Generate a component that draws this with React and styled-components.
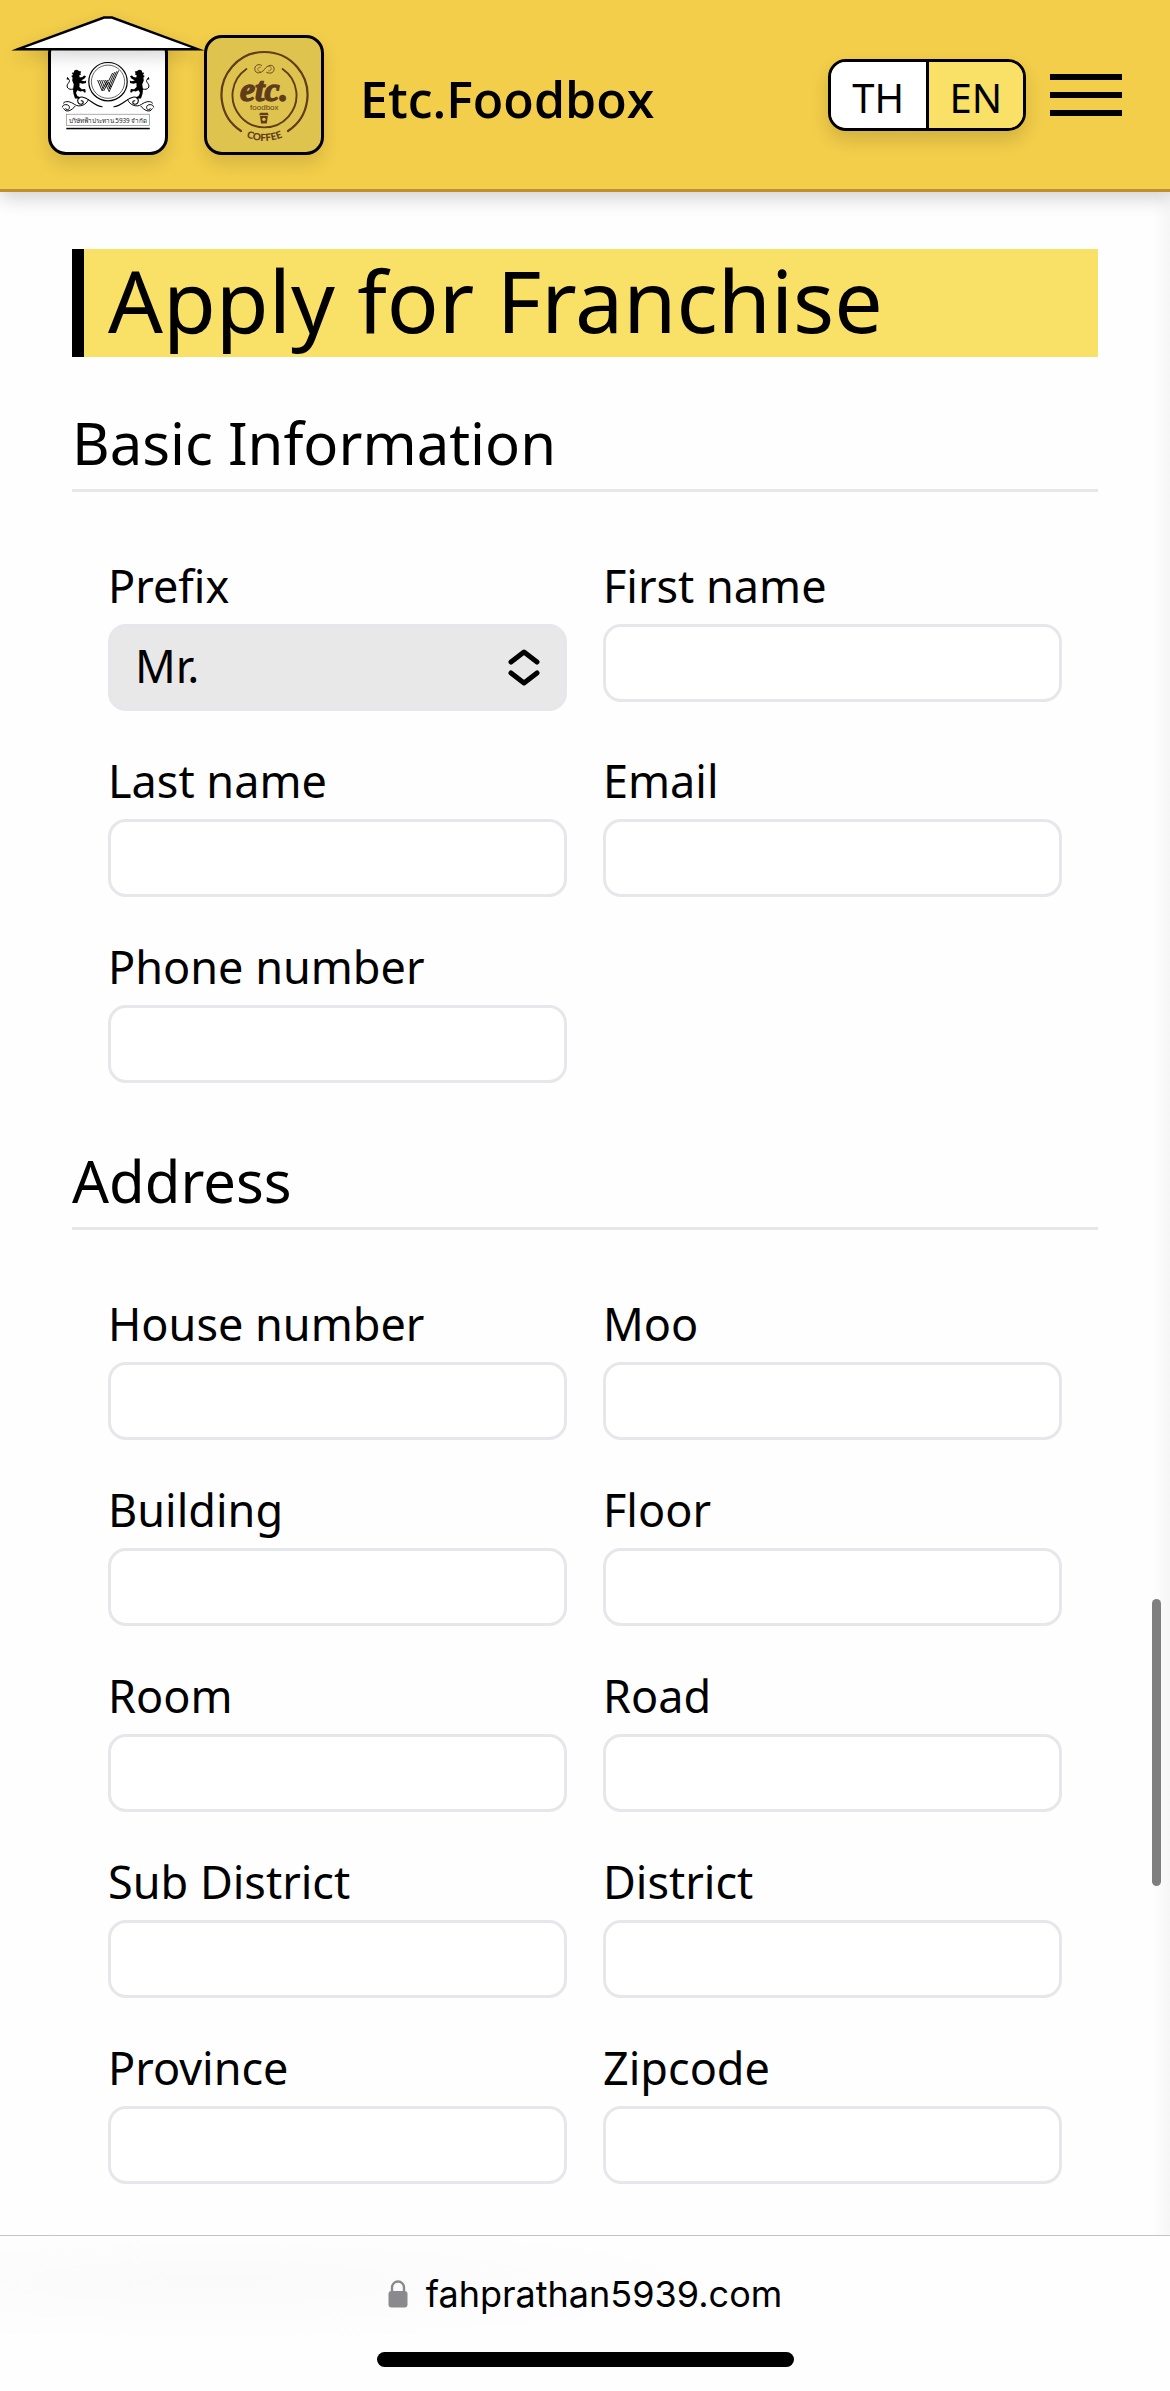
import React, { useState } from "react";
import styled, { createGlobalStyle } from "styled-components";

const GlobalStyle = createGlobalStyle`
  *, *::before, *::after { box-sizing: border-box; }
  body {
    margin: 0;
    background: #fefefe;
    color: #000;
    font-family: "Noto Sans", "Open Sans", sans-serif;
  }
  button, input, select { font: inherit; color: inherit; }
`;

const Page = styled.div`
  min-height: 100vh;
  display: flex;
  flex-direction: column;
`;

const Header = styled.header`
  position: relative;
  z-index: 1;
  display: flex;
  align-items: center;
  gap: 36px;
  height: 192px;
  padding: 0 48px;
  background: #f3ce4a;
  border-bottom: 3px solid #c09030;
  box-shadow: 0 6px 18px rgba(0, 0, 0, 0.18);
`;

const LogoBox = styled.a`
  position: relative;
  flex: none;
  width: 120px;
  height: 120px;
  border: 3px solid #000;
  border-radius: 18px;
  background: ${(p) => p.$fill};
  box-shadow: 0 9px 18px rgba(0, 0, 0, 0.12);
  color: inherit;
`;

const LogoArt = styled.svg`
  display: block;
  width: 100%;
  height: 100%;
`;

const Roof = styled.svg`
  position: absolute;
  left: -42px;
  top: -24px;
  width: 198px;
  height: 42px;
  filter: drop-shadow(0 6px 8px rgba(0, 0, 0, 0.16));
`;

const Brand = styled.span`
  flex: 1;
  padding-top: 8px;
  font-family: "Open Sans", "Noto Sans", sans-serif;
  font-size: 50px;
  font-weight: 600;
  line-height: 60px;
`;

const HeaderTools = styled.div`
  display: flex;
  align-items: center;
  gap: 24px;
`;

const LangSwitch = styled.div`
  display: flex;
  width: 198px;
  height: 72px;
  border: 3px solid #000;
  border-radius: 18px;
  overflow: hidden;
  box-shadow: 0 9px 18px rgba(0, 0, 0, 0.14);
`;

const LangButton = styled.button`
  flex: 1;
  padding: 6px 0 0;
  border: 0;
  background: ${(p) => (p.$active ? "#f9e066" : "#fff")};
  font-size: 40px;
  line-height: 60px;
  & + & { border-left: 3px solid #000; }
`;

const MenuButton = styled.button`
  display: flex;
  flex-direction: column;
  gap: 12px;
  width: 72px;
  padding: 0;
  border: 0;
  background: none;
`;

const MenuBar = styled.span`
  height: 6px;
  background: #000;
`;

const Main = styled.main`
  flex: 1;
  padding: 57px 72px 39px;
  background: linear-gradient(to left, #f6f6f6, #fefefe 18px);
`;

const Title = styled.h1`
  margin: 0;
  padding: 0 0 6px 24px;
  border-left: 12px solid #000;
  background: #f9e066;
  font-size: 86px;
  font-weight: 400;
  line-height: 102px;
`;

const SectionTitle = styled.h2`
  margin: 40px 0 0;
  border-bottom: 3px solid #e5e7e8;
  font-size: 58px;
  font-weight: 400;
  line-height: 92px;
`;

const FieldGrid = styled.div`
  display: grid;
  grid-template-columns: 1fr 1fr;
  gap: 36px;
  padding: 60px 36px 12px;
`;

const Field = styled.div`
  display: flex;
  flex-direction: column;
  gap: 4px;
`;

const Label = styled.label`
  font-size: 45px;
  line-height: 68px;
`;

const TextInput = styled.input`
  width: 100%;
  height: 78px;
  padding: 0 24px;
  border: 3px solid #e5e7eb;
  border-radius: 18px;
  background: #fff;
  font-size: 45px;
`;

const SelectWrap = styled.div`
  position: relative;
`;

const Select = styled.select`
  display: block;
  appearance: none;
  width: 100%;
  height: 87px;
  padding: 0 72px 4px 24px;
  border: 3px solid #e5e7eb;
  border-radius: 18px;
  background: #e8e8e8;
  font-size: 45px;
`;

const SelectIcon = styled.svg`
  position: absolute;
  right: 27px;
  top: 25px;
  width: 32px;
  height: 37px;
  pointer-events: none;
`;

const ScrollThumb = styled.div`
  position: fixed;
  top: 1599px;
  right: 9px;
  width: 9px;
  height: 287px;
  border-radius: 5px;
  background: #7f7f7f;
`;

const BrowserBar = styled.footer`
  display: flex;
  flex-direction: column;
  align-items: center;
  justify-content: space-between;
  height: 156px;
  padding: 34px 0 24px;
  border-top: 1px solid #c4c4c6;
  background: radial-gradient(ellipse at 18% 30%, #fafafa, #fefefe 40%);
`;

const Address = styled.div`
  display: flex;
  align-items: center;
  gap: 18px;
  font-family: Inter, "Liberation Sans", sans-serif;
  font-size: 36px;
  line-height: 48px;
`;

const LockIcon = styled.svg`
  width: 20px;
  height: 28px;
`;

const HomeIndicator = styled.div`
  width: 417px;
  height: 15px;
  border-radius: 8px;
  background: #000;
`;

const sections = [
  {
    title: "Basic Information",
    fields: [
      { id: "prefix", label: "Prefix", options: ["Mr.", "Mrs.", "Miss"] },
      { id: "first-name", label: "First name" },
      { id: "last-name", label: "Last name" },
      { id: "email", label: "Email", type: "email" },
      { id: "phone", label: "Phone number", type: "tel" },
    ],
  },
  {
    title: "Address",
    fields: [
      { id: "house-number", label: "House number" },
      { id: "moo", label: "Moo" },
      { id: "building", label: "Building" },
      { id: "floor", label: "Floor" },
      { id: "room", label: "Room" },
      { id: "road", label: "Road" },
      { id: "sub-district", label: "Sub District" },
      { id: "district", label: "District" },
      { id: "province", label: "Province" },
      { id: "zipcode", label: "Zipcode" },
    ],
  },
];

function CrestSide() {
  return (
    <g>
      <path d="M26.5 35.2 L29 34.8 L31 36 L33.2 36.6 L32.4 38.4 L33 39.6 L31.2 40.4 L31.8 42.6 L34.4 42 L36.2 40.4 L38 41.2 L36.6 43.4 L33.2 45.4 L36.4 46.2 L38.2 45.6 L38 48 L34.6 48.8 L31.6 48 L31.4 52 L33.8 54.2 L37.2 54 L37.8 57.2 L36 57.6 L35.2 56 L32.2 56.6 L29.4 55.2 L28 58 L29.4 61 L32 62.2 L31.4 63.6 L27 63.4 L25.4 58.6 L25 54 L25.8 49.6 L24.2 45.6 L24.6 42.4 L23.2 41 L25 40 L23.8 37.8 L25.8 37.4 Z" />
      <path d="M25.5 54 C20 55.5 17.6 51.6 20 48.6 C22 46.2 22 44.6 19.6 43.6" fill="none" stroke="#000" strokeWidth="1" />
      <path d="M18.6 44.6 L19.2 41.8 L21.4 44.4 Z" />
      <path d="M54.5 71.8 C46 71.5 41 62.6 34 62 C28.4 61.6 28.4 69.4 33.2 69.2 C36.4 68.6 35.4 65 32.8 66" fill="none" stroke="#000" strokeWidth="1.1" />
      <path d="M40.5 64.5 C38 70.5 31 72.6 26.5 69.4 C22.5 66.4 17.4 65.4 15.2 68.4 M14.4 72.4 C14 69 21.4 68.4 21.4 72.4 C21.4 75.4 17.6 75.6 17.8 73.2 M15.6 73.4 C18 78.4 24 75.4 27.2 71" fill="none" stroke="#000" strokeWidth="1" />
    </g>
  );
}

function CompanyLogo() {
  return (
    <LogoArt viewBox="3 3 114 114" role="img" aria-label="Fah Prathan 5939">
      <circle cx="60" cy="46.7" r="19.2" fill="none" stroke="#000" strokeWidth="1.2" />
      <circle cx="60" cy="46.7" r="16.6" fill="none" stroke="#000" strokeWidth="0.6" />
      <g fill="none" stroke="#000" strokeWidth="0.9">
        <path d="M49.6 45 L54 55.5 M51.6 45 L55 53.6 M53.6 45 L56.2 51.6 M55.6 45 L61 56.2 M57.4 45 L62 54 M59 45 L63 52" />
        <path d="M54 56 L58.6 46.5 M55.6 56 L60 47.5" />
        <path d="M61 57 L70.6 35.5 M61 53.6 L68.6 36.4 M61 49.6 L66.6 37.2 M60.6 46 L64.6 38" />
      </g>
      <CrestSide />
      <g transform="matrix(-1 0 0 1 120 0)">
        <CrestSide />
      </g>
      <rect x="18.5" y="79.2" width="83" height="11.3" fill="#fff" stroke="#777" strokeWidth="0.6" />
      <text x="60" y="87.6" textAnchor="middle" fontSize="6.3" fill="#222">
        บริษัทฟ้าประทาน 5939 จำกัด
      </text>
      <rect x="18.3" y="92.8" width="83.5" height="1.5" />
    </LogoArt>
  );
}

function CoffeeLogo() {
  return (
    <LogoArt viewBox="3 3 114 114" role="img" aria-label="etc. foodbox coffee">
      <g fill="none" stroke="#5f3d1b" strokeLinecap="round">
        <path d="M37 96 A43 43 0 1 1 84 96" strokeWidth="2.2" />
        <path d="M42.4 34 A32 32 0 1 0 78.6 34" strokeWidth="1.9" />
        <path d="M57.6 30.4 C54 28 50.4 31 50.8 34.4 C51.4 39 57 39 60.4 34.4 C63.4 30 69 28.6 70 33 C70.8 37 67 39.6 62.6 37.4" strokeWidth="0.9" />
        <path d="M56.6 32.4 C53.6 31 52.2 36.4 56.2 36.6 M64.8 31.4 C68.6 31 68 36.4 64.6 35.8" strokeWidth="0.6" />
      </g>
      <g fill="#5f3d1b">
        <text
          x="60"
          y="65.6"
          textAnchor="middle"
          fontFamily="Liberation Serif, serif"
          fontSize="34"
          fontWeight="700"
          fontStyle="italic"
          stroke="#5f3d1b"
          strokeWidth="1.4"
        >
          etc.
        </text>
        <text x="60.3" y="75.4" textAnchor="middle" fontFamily="Liberation Sans, sans-serif" fontSize="8">
          foodbox
        </text>
        <path d="M56 77.8 H63.8 L64.6 80.2 H55.2 Z M56 81 H63.8 L62.8 88.4 H57 Z" />
        <circle cx="59.9" cy="84.3" r="1.6" fill="#dfc34f" />
        <path id="coffee-arc" d="M14.4 60 A46 46 0 0 0 106.4 60" fill="none" />
        <text fontFamily="Lato, sans-serif" fontSize="10" fontWeight="900" textAnchor="middle">
          <textPath href="#coffee-arc" startOffset="50%">COFFEE</textPath>
        </text>
      </g>
    </LogoArt>
  );
}

function FormField({ field }) {
  return (
    <Field>
      <Label htmlFor={field.id}>{field.label}</Label>
      {field.options ? (
        <SelectWrap>
          <Select id={field.id}>
            {field.options.map((option) => (
              <option key={option}>{option}</option>
            ))}
          </Select>
          <SelectIcon viewBox="0 0 32 37" aria-hidden="true">
            <path
              d="M3 13 L16 3 L29 13 M3 24 L16 34 L29 24"
              fill="none"
              stroke="#000"
              strokeWidth="5"
              strokeLinecap="round"
              strokeLinejoin="round"
            />
          </SelectIcon>
        </SelectWrap>
      ) : (
        <TextInput id={field.id} type={field.type || "text"} />
      )}
    </Field>
  );
}

export default function App() {
  const [lang, setLang] = useState("EN");
  return (
    <Page>
      <GlobalStyle />
      <Header>
        <LogoBox href="#home" $fill="#fff">
          <CompanyLogo />
          <Roof viewBox="0 0 198 42" aria-hidden="true">
            <path d="M9 35.2 L95 3.5 H103 L189 35.2 Z" fill="#fff" />
            <path d="M9 35.2 L95 3.5 H103 L189 35.2 Z" fill="none" stroke="#000" strokeWidth="2.4" strokeMiterlimit="10" />
          </Roof>
        </LogoBox>
        <LogoBox href="#coffee" $fill="#dfc34f">
          <CoffeeLogo />
        </LogoBox>
        <Brand>Etc.Foodbox</Brand>
        <HeaderTools>
          <LangSwitch>
            {["TH", "EN"].map((code) => (
              <LangButton key={code} type="button" $active={lang === code} onClick={() => setLang(code)}>
                {code}
              </LangButton>
            ))}
          </LangSwitch>
          <MenuButton type="button" aria-label="Menu">
            <MenuBar />
            <MenuBar />
            <MenuBar />
          </MenuButton>
        </HeaderTools>
      </Header>
      <Main>
        <Title>Apply for Franchise</Title>
        <form>
          {sections.map((section) => (
            <section key={section.title}>
              <SectionTitle>{section.title}</SectionTitle>
              <FieldGrid>
                {section.fields.map((field) => (
                  <FormField key={field.id} field={field} />
                ))}
              </FieldGrid>
            </section>
          ))}
        </form>
      </Main>
      <ScrollThumb />
      <BrowserBar>
        <Address>
          <LockIcon viewBox="0 0 20 28" aria-hidden="true">
            <rect x="0.5" y="11" width="19" height="16.5" rx="3" fill="#8a8a8e" />
            <path d="M4 12 V7.5 A6 6 0 0 1 16 7.5 V12" fill="none" stroke="#8a8a8e" strokeWidth="2.4" />
          </LockIcon>
          fahprathan5939.com
        </Address>
        <HomeIndicator />
      </BrowserBar>
    </Page>
  );
}
